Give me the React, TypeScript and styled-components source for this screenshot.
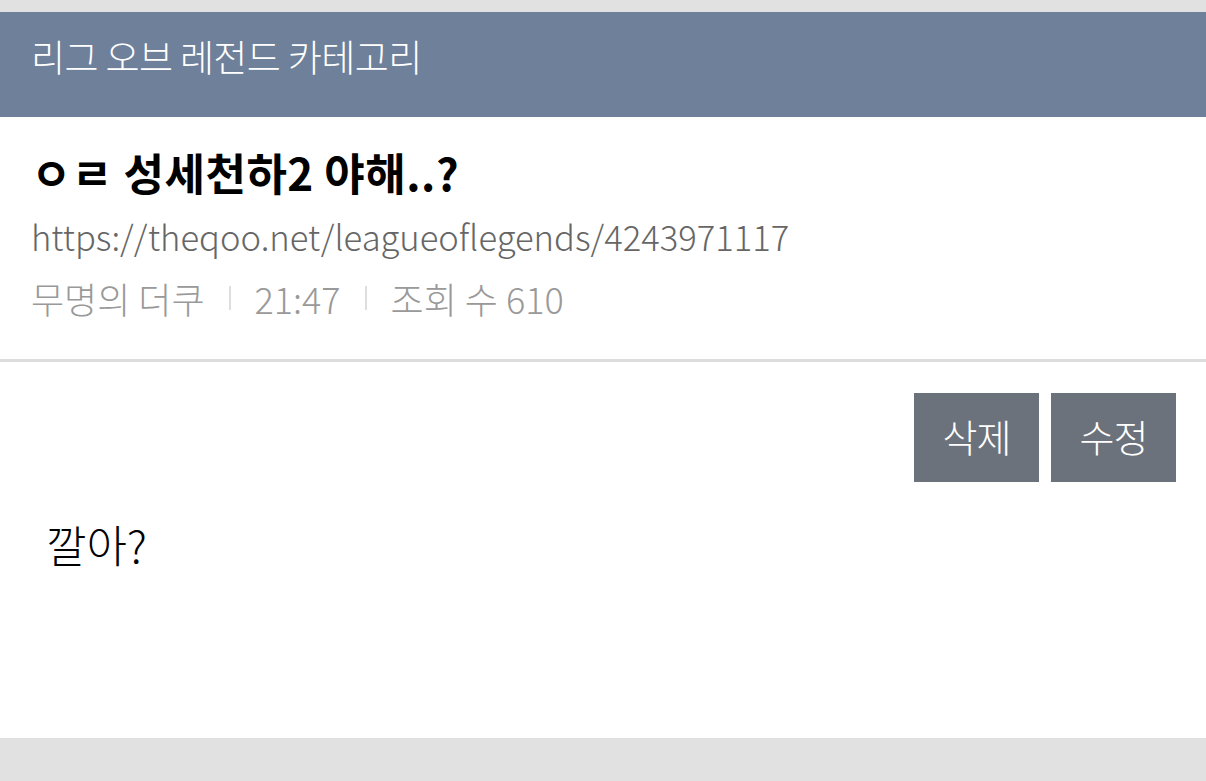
import React from "react";
import styled, { createGlobalStyle } from "styled-components";

const Global = createGlobalStyle`
  html, body { margin: 0; padding: 0; background: #e1e1e1; }
  body { font-family: "Noto Sans CJK KR", "Noto Sans", sans-serif; }
  * { box-sizing: border-box; }
`;

const Page = styled.div`
  width: 1206px;
  height: 781px;
  padding-top: 12px;
  background: #e1e1e1;
  display: flex;
  flex-direction: column;
`;

const CategoryBar = styled.div`
  height: 105px;
  background: #6f809b;
  color: #fff;
  display: flex;
  align-items: center;
  padding: 0 31px 18px;
  font-size: 37px;
  font-weight: 300;
  letter-spacing: -0.6px;
`;

const Card = styled.div`
  background: #fff;
  height: 621px;
  display: flex;
  flex-direction: column;
`;

const Head = styled.div`
  padding: 26px 31px 0;
  height: 245px;
  border-bottom: 3px solid #dddddd;
`;

const Title = styled.h1`
  margin: 0;
  font-size: 44px;
  font-weight: 700;
  color: #000;
  line-height: 58px;
  letter-spacing: 0.5px;
`;

const Url = styled.div`
  font-size: 34.6px;
  font-weight: 300;
  color: #666;
  line-height: 44px;
  margin-top: 13px;
`;

const Meta = styled.div`
  display: flex;
  align-items: center;
  font-size: 36px;
  font-weight: 300;
  color: #999;
  line-height: 44px;
  margin-top: 18px;
`;

const Sep = styled.span`
  display: inline-block;
  width: 2px;
  height: 24px;
  background: #dedede;
  margin: 0 24px;
`;

const Actions = styled.div`
  display: flex;
  justify-content: flex-end;
  gap: 12px;
  padding: 31px 30px 0;
`;

const Btn = styled.button`
  width: 125px;
  height: 89px;
  background: #6c727b;
  color: #fff;
  border: none;
  font-family: inherit;
  font-size: 38px;
  font-weight: 300;
  padding: 0 0 4px;
  letter-spacing: -1px;
`;

const Body = styled.div`
  padding: 34px 46px;
  font-size: 44px;
  font-weight: 300;
  color: #000;
  line-height: 56px;
  letter-spacing: 0px;
`;

export default function App() {
  return (
    <Page>
      <Global />
      <CategoryBar>리그 오브 레전드 카테고리</CategoryBar>
      <Card>
        <Head>
          <Title>ㅇㄹ 성세천하2 야해..?</Title>
          <Url>https://theqoo.net/leagueoflegends/4243971117</Url>
          <Meta>
            무명의 더쿠<Sep />21:47<Sep />조회 수 610
          </Meta>
        </Head>
        <Actions>
          <Btn>삭제</Btn>
          <Btn>수정</Btn>
        </Actions>
        <Body>깔아?</Body>
      </Card>
    </Page>
  );
}
